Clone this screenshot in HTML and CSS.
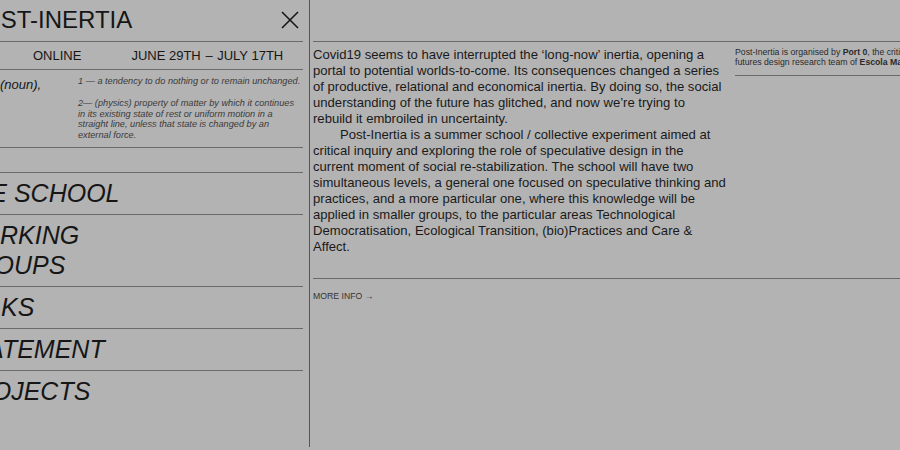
FILE: index.html
```html
<!DOCTYPE html>
<html lang="en">
<head>
<meta charset="utf-8">
<title>Post-Inertia</title>
<link rel="stylesheet" href="styles.css">
</head>
<body>
<div class="page">
  <aside class="left">
    <header class="brand">
      <h1 class="title">POST-INERTIA</h1>
      <button class="close" aria-label="Close">
        <svg width="18" height="18" viewBox="0 0 18 18"><path d="M1 1 L17 17 M17 1 L1 17" stroke="#161616" stroke-width="1.6" fill="none"/></svg>
      </button>
    </header>
    <div class="meta">
      <span>ONLINE</span>
      <span>JUNE 29TH <span class="dash">–</span> JULY 17TH</span>
    </div>
    <div class="def">
      <div class="word">(noun),</div>
      <div class="defs">
        <p>1 — a tendency to do nothing or to remain unchanged.</p>
        <p>2— (physics) property of matter by which it continues in its existing state of rest or uniform motion in a straight line, unless that state is changed by an external force.</p>
      </div>
    </div>
    <div class="spacer"></div>
    <nav class="nav">
      <a href="#">THE SCHOOL</a>
      <a href="#">WORKING<br>GROUPS</a>
      <a href="#">TALKS</a>
      <a href="#">STATEMENT</a>
      <a href="#">PROJECTS</a>
    </nav>
  </aside>
  <main class="right">
    <div class="topbar"></div>
    <div class="content">
      <div class="text">
        <p>Covid19 seems to have interrupted the ‘long-now’ inertia, opening a portal to potential worlds-to-come. Its consequences changed a series of productive, relational and economical inertia. By doing so, the social understanding of the future has glitched, and now we’re trying to rebuild it embroiled in uncertainty.</p>
        <p class="indent">Post-Inertia is a summer school / collective experiment aimed at critical inquiry and exploring the role of speculative design in the current moment of social re-stabilization. The school will have two simultaneous levels, a general one focused on speculative thinking and practices, and a more particular one, where this knowledge will be applied in smaller groups, to the particular areas Technological Democratisation, Ecological Transition, (bio)Practices and Care &amp; Affect.</p>
      </div>
      <aside class="credit">
        <p>Post-Inertia is organised by <b>Port 0</b>, the critical futures design research team of <b>Escola Massana</b>.</p>
      </aside>
      <footer class="more">MORE INFO →</footer>
    </div>
  </main>
</div>
</body>
</html>
```
FILE: styles.css
```css
html, body {
  margin: 0;
  padding: 0;
}
body {
  background: #b3b3b3;
  color: #161616;
  font-family: "Liberation Sans", Arial, sans-serif;
  width: 900px;
  height: 450px;
  overflow: hidden;
}
.page {
  display: flex;
  margin-left: -34px;
  height: 447px;
  width: 1000px;
}
.left {
  flex: 0 0 337px;
  padding-right: 6px;
  border-right: 1px solid #555;
  display: flex;
  flex-direction: column;
}
.brand {
  box-sizing: border-box;
  height: 42px;
  padding-bottom: 2px;
  border-bottom: 1px solid #6a6a6a;
  display: flex;
  align-items: center;
  justify-content: space-between;
}
.title {
  margin: 0;
  font-size: 24px;
  font-weight: 400;
  line-height: 24px;
}
.close {
  width: 18px;
  height: 18px;
  margin-right: 4px;
  padding: 0;
  border: 0;
  background: none;
  display: block;
}
.close svg { display: block; }
.meta {
  box-sizing: border-box;
  height: 28px;
  border-bottom: 1px solid #6a6a6a;
  display: flex;
  align-items: center;
  gap: 50px;
  padding-left: 67px;
  font-size: 13px;
}
.dash { margin: 0 1px; }
.def {
  box-sizing: border-box;
  height: 78px;
  border-bottom: 1px solid #6a6a6a;
  display: grid;
  grid-template-columns: 112px 1fr;
  padding-top: 5.5px;
}
.word {
  font-style: italic;
  font-size: 13px;
  line-height: 16px;
  padding-left: 34px;
  margin-top: 1.5px;
}
.defs p {
  margin: 0 0 11.6px;
  font-size: 9.2px;
  line-height: 10.7px;
  font-style: italic;
  color: #3a3a3a;
}
.spacer {
  box-sizing: border-box;
  height: 25px;
  border-bottom: 1px solid #6a6a6a;
}
.nav {
  margin-left: -9px;
}
.nav a {
  display: block;
  color: #161616;
  text-decoration: none;
  font-style: italic;
  font-size: 25px;
  line-height: 30px;
  padding: 5px 0 6px;
  border-bottom: 1px solid #6a6a6a;
}
.nav a:last-child { border-bottom: 0; }
.right {
  flex: 0 0 640px;
  padding-left: 3px;
}
.topbar {
  height: 41px;
  border-bottom: 1px solid #6a6a6a;
}
.content {
  display: grid;
  grid-template-columns: 414px 1fr;
  column-gap: 8px;
}
.text {
  padding-top: 5px;
  font-size: 13.1px;
  line-height: 16px;
  color: #1a1a1a;
}
.text p { margin: 0; }
.text .indent { text-indent: 27px; }
.credit {
  align-self: start;
  margin-top: 6px;
  padding-bottom: 8px;
  border-bottom: 1px solid #6a6a6a;
  font-size: 8.7px;
  line-height: 9.5px;
  color: #2a2a2a;
}
.credit p {
  margin: 0;
  max-width: 200px;
}
.more {
  grid-column: 1 / -1;
  margin-top: 23px;
  border-top: 1px solid #6a6a6a;
  padding-top: 12px;
  font-size: 8.7px;
  line-height: 10px;
  color: #333;
}
```
